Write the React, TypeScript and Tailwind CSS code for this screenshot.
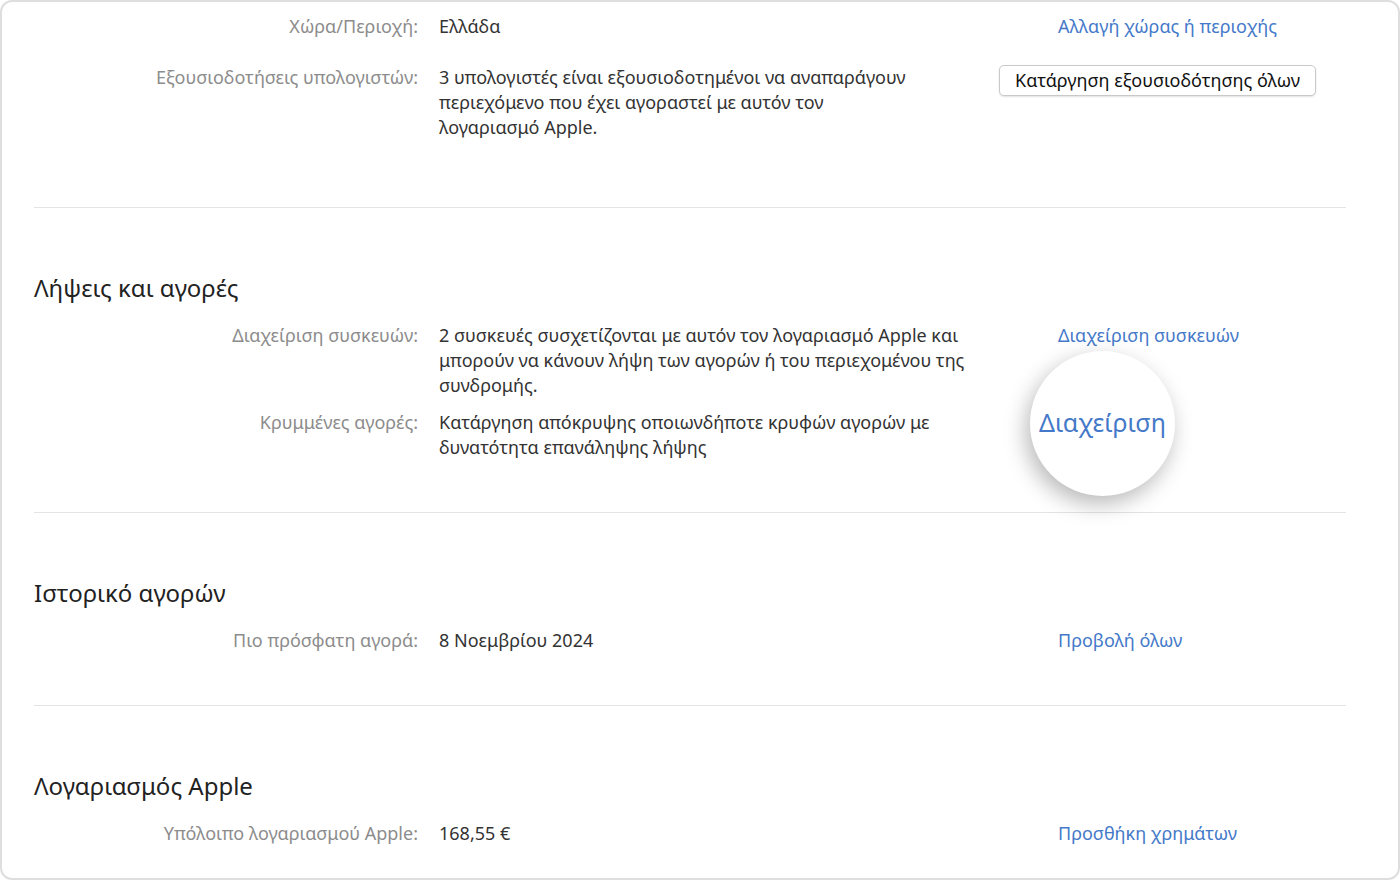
import React from 'react';

const font = { fontFamily: '"Noto Sans", "Open Sans", "DejaVu Sans", sans-serif' };

type Row = {
    label: string;
    value: React.ReactNode;
    action?: React.ReactNode;
    narrow?: boolean;
};

const Link = ({ children }: { children: React.ReactNode }) => (
    <a className="text-[#4479c9] cursor-pointer hover:underline">{children}</a>
);

const InfoRow = ({ label, value, action, narrow }: Row) => (
    <div className="grid grid-cols-[384px_598px_1fr] gap-x-[21px] text-[18px] leading-[25px]">
        <div className="text-right text-[#8c8c8c]">{label}</div>
        <div className={narrow ? 'text-[#333333] max-w-[488px]' : 'text-[#333333] max-w-[560px]'}>{value}</div>
        <div className="relative">{action}</div>
    </div>
);

const Section = ({ title, children, last }: { title: string; children: React.ReactNode; last?: boolean }) => (
    <section className={last ? 'pt-[64px]' : 'pt-[64px] pb-[52px] border-b border-[#e4e4e4]'}>
        <h2 className="text-[24px] leading-[32px] text-[#222222] mb-[19px]">{title}</h2>
        <div className="flex flex-col gap-[12px]">{children}</div>
    </section>
);

export default function App() {
    return (
        <div className="w-[1400px] h-[880px] bg-white" style={font}>
            <div className="h-full border-2 border-[#dedede] rounded-[12px] overflow-hidden pl-[32px] pr-[52px]">
                <div className="pt-[12px] pb-[67px] border-b border-[#e4e4e4] flex flex-col gap-[26px]">
                    <InfoRow
                        label="Χώρα/Περιοχή:"
                        value="Ελλάδα"
                        action={<Link>Αλλαγή χώρας ή περιοχής</Link>}
                        narrow
                    />
                    <InfoRow
                        label="Εξουσιοδοτήσεις υπολογιστών:"
                        value="3 υπολογιστές είναι εξουσιοδοτημένοι να αναπαράγουν περιεχόμενο που έχει αγοραστεί με αυτόν τον λογαριασμό Apple."
                        narrow
                        action={
                            <button className="-ml-[59px] h-[31px] px-[15px] border border-[#c9c9c9] rounded-[5px] bg-white text-[18px] leading-[25px] text-[#111] shadow-[0_1px_2px_rgba(0,0,0,0.12)]">
                                Κατάργηση εξουσιοδότησης όλων
                            </button>
                        }
                    />
                </div>

                <Section title="Λήψεις και αγορές">
                    <InfoRow
                        label="Διαχείριση συσκευών:"
                        value="2 συσκευές συσχετίζονται με αυτόν τον λογαριασμό Apple και μπορούν να κάνουν λήψη των αγορών ή του περιεχομένου της συνδρομής."
                        action={<Link>Διαχείριση συσκευών</Link>}
                    />
                    <InfoRow
                        label="Κρυμμένες αγορές:"
                        value="Κατάργηση απόκρυψης οποιωνδήποτε κρυφών αγορών με δυνατότητα επανάληψης λήψης"
                        action={
                            <>
                                <span className="invisible">Διαχείριση</span>
                                {/* magnifier lens showing the "Διαχείριση" link enlarged */}
                                <div className="absolute left-[-28px] top-[-59px] w-[145px] h-[145px] rounded-full bg-white shadow-[-4px_8px_22px_rgba(0,0,0,0.28)] flex items-center justify-center">
                                    <a className="text-[25px] text-[#4479c9] -translate-y-[1px] cursor-pointer">Διαχείριση</a>
                                </div>
                            </>
                        }
                    />
                </Section>

                <Section title="Ιστορικό αγορών">
                    <InfoRow
                        label="Πιο πρόσφατη αγορά:"
                        value="8 Νοεμβρίου 2024"
                        action={<Link>Προβολή όλων</Link>}
                    />
                </Section>

                <Section title="Λογαριασμός Apple" last>
                    <InfoRow
                        label="Υπόλοιπο λογαριασμού Apple:"
                        value="168,55 €"
                        action={<Link>Προσθήκη χρημάτων</Link>}
                    />
                </Section>
            </div>
        </div>
    );
}
